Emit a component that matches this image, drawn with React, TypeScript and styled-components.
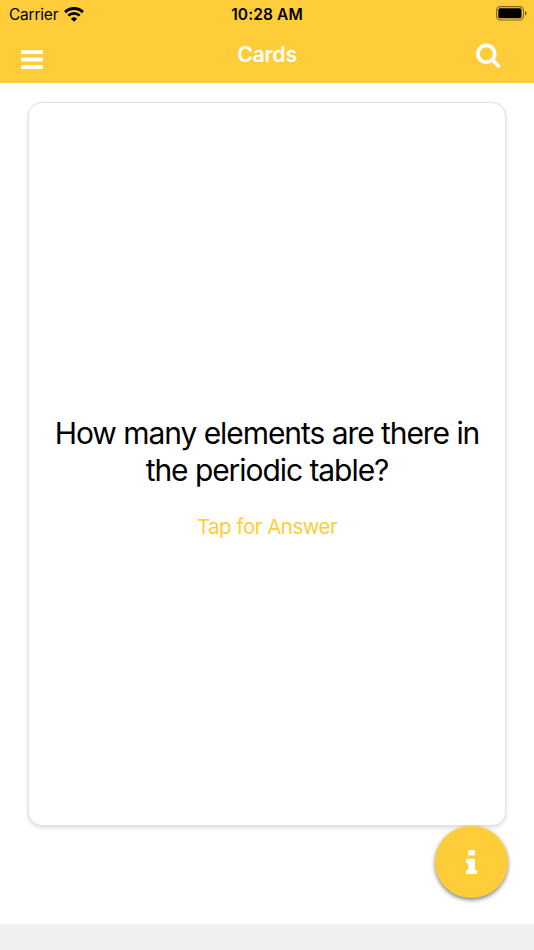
import React from "react";
import styled, { createGlobalStyle } from "styled-components";

const YELLOW = "#ffcc3a";

const GlobalStyle = createGlobalStyle`
  * { box-sizing: border-box; }
  body {
    margin: 0;
    background: #fff;
    font-family: Inter, "Liberation Sans", sans-serif;
    -webkit-font-smoothing: antialiased;
  }
  button { border: 0; padding: 0; background: none; font: inherit; cursor: pointer; }
  svg { display: block; }
`;

const Screen = styled.div`
  width: 534px;
  height: 950px;
  display: flex;
  flex-direction: column;
  overflow: hidden;
`;

const Top = styled.header`
  flex: none;
  height: 83px;
  background: ${YELLOW};
`;

const StatusBar = styled.div`
  display: grid;
  grid-template-columns: 1fr auto 1fr;
  align-items: center;
  height: 28px;
  padding: 0 7px 0 9px;
  color: #000;
`;

const Carrier = styled.div`
  display: flex;
  align-items: center;
  gap: 6px;
  padding-top: 1px;
  font-size: 15.5px;
  line-height: 27px;
  letter-spacing: -0.22px;
`;

const Clock = styled.time`
  margin-right: 2px;
  padding-top: 1px;
  font-size: 15.5px;
  font-weight: 600;
  line-height: 27px;
  letter-spacing: 0.1px;
`;

const Battery = styled.div`
  justify-self: end;
  padding-bottom: 2px;
`;

const NavBar = styled.nav`
  display: grid;
  grid-template-columns: 1fr auto 1fr;
  height: 55px;
  padding: 0 33px 0 21px;
`;

const Title = styled.h1`
  margin: 0 0 0 12px;
  font-size: 21.5px;
  font-weight: 600;
  line-height: 52px;
  letter-spacing: -0.35px;
  color: #fff;
`;

const IconButton = styled.button<{ $end?: boolean; $top: number }>`
  align-self: start;
  justify-self: ${(p) => (p.$end ? "end" : "start")};
  margin-top: ${(p) => p.$top}px;
  color: #fff;
`;

const Content = styled.main`
  flex: 1;
  padding: 19px 28px 0;
  background: #fff;
`;

const Card = styled.section`
  display: flex;
  flex-direction: column;
  align-items: center;
  height: 724px;
  padding-top: 312px;
  border: 1px solid #e1e1e3;
  border-radius: 14px;
  background: #fff;
  box-shadow: 0 2px 4px rgba(0, 0, 0, 0.13);
  text-align: center;
`;

const Question = styled.p`
  margin: 0;
  font-size: 30px;
  line-height: 37px;
  letter-spacing: -1.06px;
  color: #000;
  white-space: nowrap;
`;

const AnswerButton = styled.button`
  && {
    margin-top: 24px;
    font-size: 20.5px;
    line-height: 28px;
    letter-spacing: -0.57px;
    word-spacing: 0.3px;
    color: ${YELLOW};
  }
`;

const InfoButton = styled.button`
  && {
    position: absolute;
    left: 435.4px;
    top: 825.5px;
    display: flex;
    align-items: center;
    justify-content: center;
    width: 72.6px;
    height: 72.6px;
    border-radius: 50%;
    background: ${YELLOW};
    color: #fff;
    box-shadow: 0 2px 4px rgba(0, 0, 0, 0.5);
  }
`;

const Footer = styled.footer`
  flex: none;
  height: 26px;
  background: #f0f0f0;
`;

const WifiIcon = () => (
  <svg width="20" height="15" viewBox="0 0 20 15" fill="none" stroke="#000">
    <path d="M1.1 5.1a12.8 12.8 0 0 1 17.8 0" strokeWidth="3" />
    <path d="M4.3 8.6a8.2 8.2 0 0 1 11.4 0" strokeWidth="2.7" />
    <path d="M10 14.8 6.9 11.7a4.5 4.5 0 0 1 6.2 0Z" fill="#000" stroke="none" />
  </svg>
);

const BatteryIcon = () => (
  <svg width="31" height="15" viewBox="0 0 31 15">
    <rect x=".6" y=".6" width="26.8" height="13.4" rx="3.8" fill="none" stroke="#000" strokeOpacity=".5" strokeWidth="1.1" />
    <rect x="2.3" y="2.3" width="23.2" height="10" rx="1.6" />
    <path d="M29 5.1c2 .7 2 3.7 0 4.4Z" fillOpacity=".6" />
  </svg>
);

const MenuIcon = () => (
  <svg width="22" height="20" viewBox="0 0 22 20" fill="currentColor">
    <rect y="0.2" width="22" height="3.8" rx=".9" />
    <rect y="7.6" width="22" height="3.8" rx=".9" />
    <rect y="15" width="22" height="3.9" rx=".9" />
  </svg>
);

const SearchIcon = () => (
  <svg width="25" height="25" viewBox="64 94 1710 1710" fill="currentColor">
    <path d="M1216 832q0-185-131.5-316.5t-316.5-131.5-316.5 131.5-131.5 316.5 131.5 316.5 316.5 131.5 316.5-131.5 131.5-316.5zm512 832q0 52-38 90t-90 38q-54 0-90-38l-343-342q-179 124-399 124-143 0-273.5-55.5t-225-150-150-225-55.5-273.5 55.5-273.5 150-225 225-150 273.5-55.5 273.5 55.5 225 150 150 225 55.5 273.5q0 220-124 399l343 343q37 37 37 90z" />
  </svg>
);

const InfoIcon = () => (
  <svg width="11.2" height="24.4" viewBox="0 128 640 1408" fill="currentColor">
    <path d="M640 1344v128q0 26-19 45t-45 19h-512q-26 0-45-19t-19-45v-128q0-26 19-45t45-19h64v-384h-64q-26 0-45-19t-19-45v-128q0-26 19-45t45-19h384q26 0 45 19t19 45v576h64q26 0 45 19t19 45zm-128-1152v192q0 26-19 45t-45 19h-256q-26 0-45-19t-19-45v-192q0-26 19-45t45-19h256q26 0 45 19t19 45z" />
  </svg>
);

export default function App() {
  return (
    <>
      <GlobalStyle />
      <Screen>
        <Top>
          <StatusBar>
            <Carrier>
              Carrier
              <WifiIcon />
            </Carrier>
            <Clock>10:28 AM</Clock>
            <Battery>
              <BatteryIcon />
            </Battery>
          </StatusBar>
          <NavBar>
            <IconButton $top={22} aria-label="Menu">
              <MenuIcon />
            </IconButton>
            <Title>Cards</Title>
            <IconButton $end $top={15} aria-label="Search">
              <SearchIcon />
            </IconButton>
          </NavBar>
        </Top>
        <Content>
          <Card>
            <Question>
              How many elements are there in
              <br />
              the periodic table?
            </Question>
            <AnswerButton>Tap for Answer</AnswerButton>
          </Card>
        </Content>
        <Footer />
        <InfoButton aria-label="Information">
          <InfoIcon />
        </InfoButton>
      </Screen>
    </>
  );
}
